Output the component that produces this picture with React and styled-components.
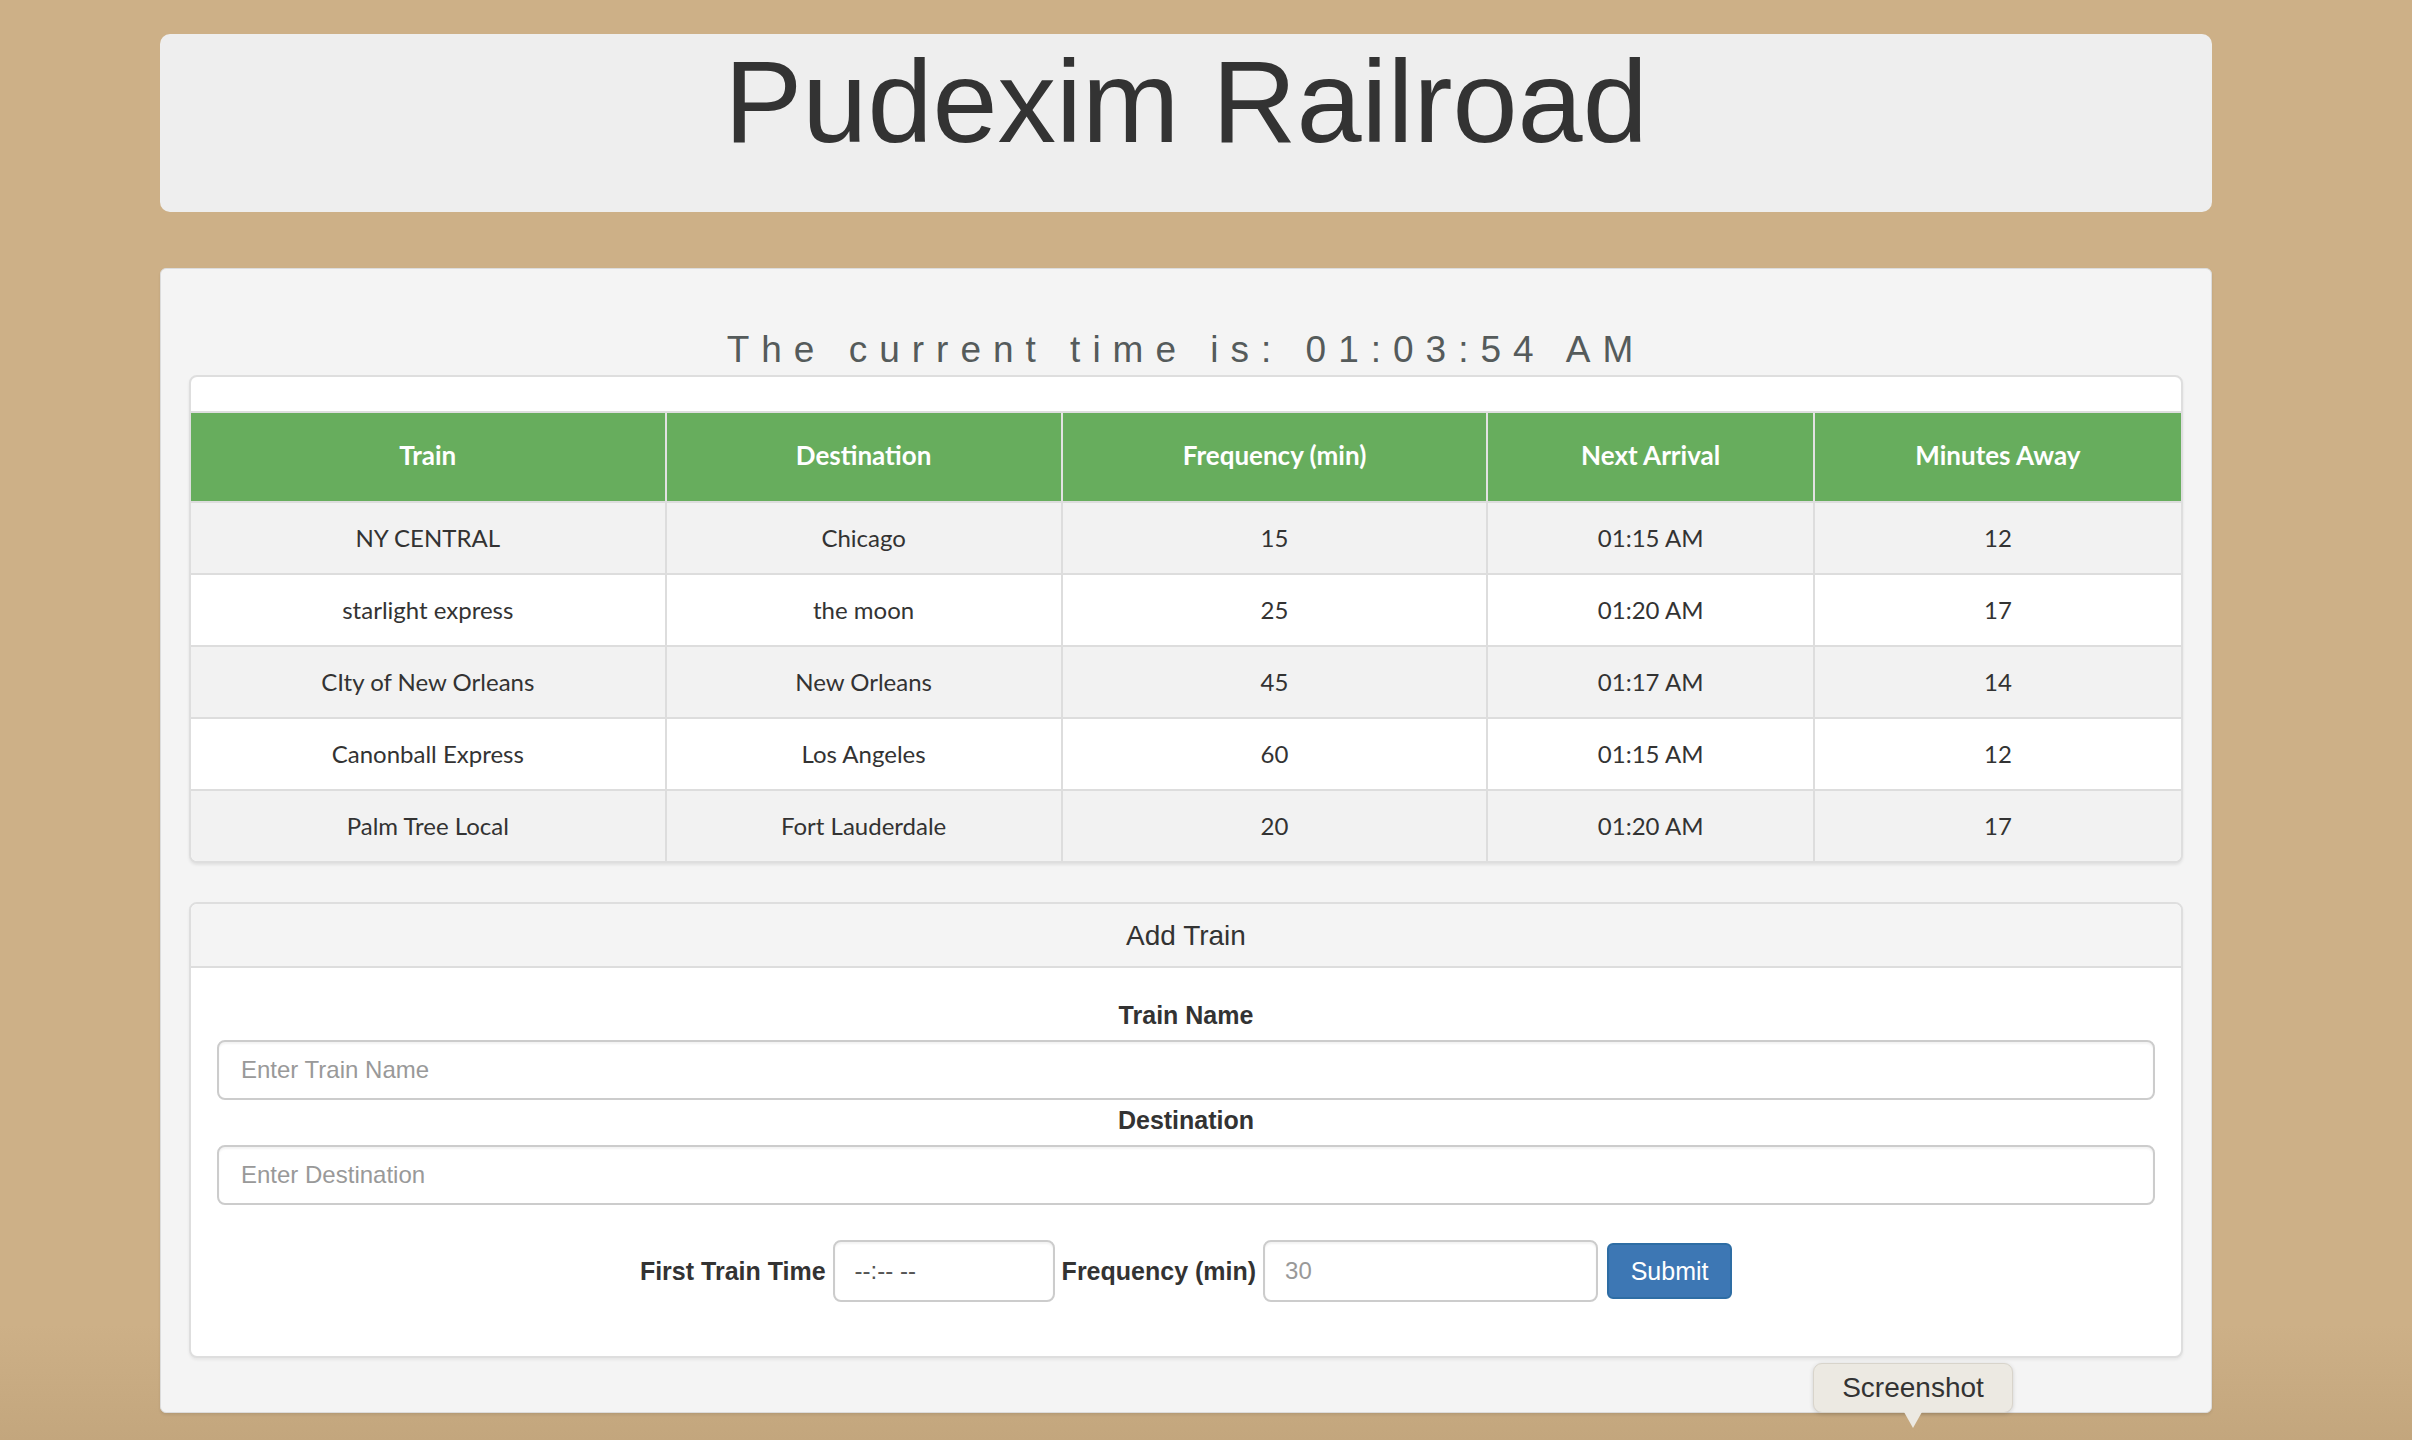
import React from 'react';
import styled, { createGlobalStyle } from 'styled-components';

const trains = [
    { name: 'NY CENTRAL', dest: 'Chicago', freq: 15, next: '01:15 AM', away: 12 },
    { name: 'starlight express', dest: 'the moon', freq: 25, next: '01:20 AM', away: 17 },
    { name: 'CIty of New Orleans', dest: 'New Orleans', freq: 45, next: '01:17 AM', away: 14 },
    { name: 'Canonball Express', dest: 'Los Angeles', freq: 60, next: '01:15 AM', away: 12 },
    { name: 'Palm Tree Local', dest: 'Fort Lauderdale', freq: 20, next: '01:20 AM', away: 17 },
];

// column widths as share of the table, taken from the layout
const columns = [
    { label: 'Train', width: 23.9 },
    { label: 'Destination', width: 19.9 },
    { label: 'Frequency (min)', width: 21.4 },
    { label: 'Next Arrival', width: 16.4 },
    { label: 'Minutes Away', width: 18.4 },
];

const App = () => {
    return (
        <Page>
            <GlobalStyle />

            <Jumbotron>
                <h1>Pudexim Railroad</h1>
            </Jumbotron>

            <MainPanel>
                <Clock>The current time is: 01:03:54 AM</Clock>

                <TableCard>
                    <Schedule>
                        <thead>
                            <tr>
                                {columns.map((c) => (
                                    <HeadCell key={c.label} $w={c.width}>{c.label}</HeadCell>
                                ))}
                            </tr>
                        </thead>
                        <tbody>
                            {trains.map((t, i) => (
                                <Row key={t.name} $striped={i % 2 === 0}>
                                    <Cell>{t.name}</Cell>
                                    <Cell>{t.dest}</Cell>
                                    <Cell>{t.freq}</Cell>
                                    <Cell>{t.next}</Cell>
                                    <Cell>{t.away}</Cell>
                                </Row>
                            ))}
                        </tbody>
                    </Schedule>
                </TableCard>

                <FormCard>
                    <FormHeading>Add Train</FormHeading>
                    <FormBody>
                        <Label>Train Name</Label>
                        <TextInput placeholder="Enter Train Name" />
                        <Label>Destination</Label>
                        <TextInput placeholder="Enter Destination" />

                        <InlineRow>
                            <InlineLabel>First Train Time</InlineLabel>
                            <SmallInput $w={222} $dark placeholder="--:-- --" />
                            <InlineLabel>Frequency (min)</InlineLabel>
                            <SmallInput $w={335} placeholder="30" />
                            <SubmitButton>Submit</SubmitButton>
                        </InlineRow>
                    </FormBody>
                </FormCard>
            </MainPanel>

            <Tooltip>Screenshot</Tooltip>
        </Page>
    );
}

// Styled components

const GlobalStyle = createGlobalStyle`
    html, body {
        margin: 0;
        padding: 0;
    }

    body {
        background: linear-gradient(to bottom, #cdb087 0%, #cdb087 92%, #c3a67d 100%);
        min-height: 1440px;
        font-family: "Liberation Sans", Arial, sans-serif;
        color: #333;
    }
`;

const Page = styled.div`
    position: relative;
    width: 2052px;
    padding: 34px 0 0 160px;
    min-height: 1406px;
`;

const Jumbotron = styled.div`
    background: #eeeeee;
    border-radius: 10px;
    padding: 3px 0 45px;
    text-align: center;

    h1 {
        margin: 0;
        font-family: "Liberation Sans", Arial, sans-serif;
        font-weight: 400;
        font-size: 117px;
        line-height: 130px;
        color: #333;
    }
`;

const MainPanel = styled.div`
    margin-top: 56px;
    background: #f4f4f4;
    border: 1px solid #dcdcdc;
    border-radius: 6px;
    box-shadow: 0 2px 3px rgba(0, 0, 0, 0.08);
    padding: 0 28px 54px;
`;

const Clock = styled.div`
    margin: 60px 0 4px;
    text-align: center;
    font-family: "Liberation Sans", Arial, sans-serif;
    font-size: 37px;
    line-height: 42px;
    letter-spacing: 12px;
    color: #555b5b;
`;

const TableCard = styled.div`
    background: #fff;
    border: 2px solid #dedede;
    border-radius: 8px;
    padding-top: 34px;
    box-shadow: 0 2px 3px rgba(0, 0, 0, 0.08);
    overflow: hidden;
`;

const Schedule = styled.table`
    width: 100%;
    table-layout: fixed;
    border-collapse: separate;
    border-spacing: 0;
    font-family: Lato, "Noto Sans", sans-serif;
    font-size: 24px;
    text-align: center;
    border-top: 2px solid #dedede;
`;

const HeadCell = styled.th`
    box-sizing: border-box;
    width: ${(p) => p.$w}%;
    height: 88px;
    padding: 0 12px 4px;
    background: #67ad5d;
    color: #fff;
    font-size: 26px;
    font-weight: 700;
    border-right: 2px solid #e2e2e2;

    &:last-child {
        border-right: none;
    }
`;

const Row = styled.tr`
    background: ${(p) => (p.$striped ? '#f2f2f2' : '#ffffff')};
`;

const Cell = styled.td`
    height: 68px;
    padding: 0 12px 2px;
    color: #333;
    border-top: 2px solid #dddddd;
    border-right: 2px solid #dddddd;

    &:last-child {
        border-right: none;
    }
`;

const FormCard = styled.div`
    margin-top: 39px;
    background: #fff;
    border: 2px solid #dedede;
    border-radius: 8px;
    box-shadow: 0 2px 3px rgba(0, 0, 0, 0.06);
    overflow: hidden;
`;

const FormHeading = styled.div`
    background: #f4f4f4;
    border-bottom: 2px solid #dddddd;
    padding-top: 2px;
    line-height: 60px;
    text-align: center;
    font-size: 28px;
    color: #333;
`;

const FormBody = styled.div`
    padding: 27px 26px 54px;
`;

const Label = styled.div`
    margin: 2px 0 7px;
    text-align: center;
    font-size: 25px;
    line-height: 36px;
    font-weight: 700;
    color: #333;
`;

const TextInput = styled.input`
    display: block;
    box-sizing: border-box;
    width: 100%;
    height: 60px;
    padding: 0 22px;
    border: 2px solid #cccccc;
    border-radius: 8px;
    box-shadow: inset 0 2px 2px rgba(0, 0, 0, 0.05);
    font-family: "Liberation Sans", Arial, sans-serif;
    font-size: 24px;
    color: #555;
    outline: none;

    &::placeholder {
        color: #999;
    }
`;

const InlineRow = styled.div`
    margin-top: 35px;
    display: flex;
    justify-content: center;
    align-items: center;
    gap: 7px;
`;

const InlineLabel = styled.label`
    font-size: 25px;
    font-weight: 700;
    color: #333;
    white-space: nowrap;
`;

const SmallInput = styled(TextInput)`
    width: ${(p) => p.$w}px;
    height: 62px;
    padding: 0 20px;

    &::placeholder {
        color: ${(p) => (p.$dark ? '#555' : '#999')};
    }
`;

const SubmitButton = styled.button`
    margin-left: 2px;
    height: 56px;
    width: 125px;
    background: #3d77b4;
    border: 2px solid #2e6da4;
    border-radius: 6px;
    color: #fff;
    font-family: "Liberation Sans", Arial, sans-serif;
    font-size: 25px;
    cursor: pointer;
`;

const Tooltip = styled.div`
    position: absolute;
    left: 1813px;
    top: 1363px;
    width: 200px;
    height: 50px;
    box-sizing: border-box;
    background: #ece9e2;
    border: 1px solid #d8d4cb;
    border-radius: 9px;
    box-shadow: 0 1px 4px rgba(0, 0, 0, 0.15);
    text-align: center;
    line-height: 48px;
    font-family: "Liberation Sans", Arial, sans-serif;
    font-size: 28px;
    color: #333;

    &::after {
        content: '';
        position: absolute;
        left: 50%;
        bottom: -16px;
        margin-left: -9px;
        border-left: 9px solid transparent;
        border-right: 9px solid transparent;
        border-top: 16px solid #ece9e2;
    }
`;

export default App;
